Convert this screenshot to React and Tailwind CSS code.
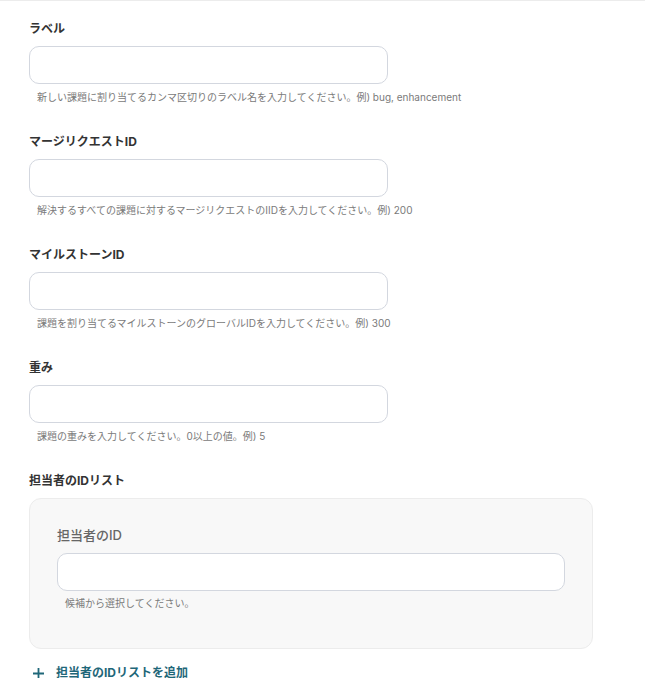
import React from "react";

const font = { fontFamily: 'Inter, "Noto Sans CJK JP", "Noto Sans", sans-serif' };

const Field = ({ label, help }) => (
	<div className="flex flex-col">
		<label className="text-[12px] leading-[16px] font-bold text-[#333333]">{label}</label>
		<input
			type="text"
			className="mt-[9px] w-[359px] h-[38px] rounded-[10px] border border-[#d3d7df] bg-white px-3 outline-none"
		/>
		<p className="mt-[6px] ml-2 text-[10px] leading-[14px] text-[#7a7a7a]">{help}</p>
	</div>
);

export default function App() {
	return (
		<div
			className="min-h-screen bg-white border-t border-[#ececec] pl-[29px] pt-[20px]"
			style={font}
		>
			<div className="flex flex-col gap-[30px]">
				<Field
					label="ラベル"
					help="新しい課題に割り当てるカンマ区切りのラベル名を入力してください。例) bug, enhancement"
				/>
				<Field
					label="マージリクエストID"
					help="解決するすべての課題に対するマージリクエストのIIDを入力してください。例) 200"
				/>
				<Field
					label="マイルストーンID"
					help="課題を割り当てるマイルストーンのグローバルIDを入力してください。例) 300"
				/>
				<Field label="重み" help="課題の重みを入力してください。0以上の値。例) 5" />

				{/* Assignee list */}
				<div className="flex flex-col">
					<label className="text-[12px] leading-[16px] font-bold text-[#333333]">担当者のIDリスト</label>
					<div className="mt-[9px] w-[564px] rounded-[12px] border border-[#ececec] bg-[#f8f8f8] px-[27px] pt-[27px] pb-[38px]">
						<label className="block text-[13px] leading-[18px] font-medium text-[#666666]">担当者のID</label>
						<input
							type="text"
							className="mt-[9px] w-full h-[38px] rounded-[10px] border border-[#d3d7df] bg-white px-3 outline-none"
						/>
						<p className="mt-[5px] ml-2 text-[10px] leading-[14px] text-[#7a7a7a]">候補から選択してください。</p>
					</div>
					<button className="mt-[16px] flex items-center gap-[12px] pl-1 text-[12px] leading-[16px] font-bold text-[#1f6779]">
						<svg width="11" height="11" viewBox="0 0 11 11" fill="none" stroke="currentColor" strokeWidth="1.8">
							<path d="M5.5 0v11M0 5.5h11" />
						</svg>
						担当者のIDリストを追加
					</button>
				</div>
			</div>
		</div>
	);
}
